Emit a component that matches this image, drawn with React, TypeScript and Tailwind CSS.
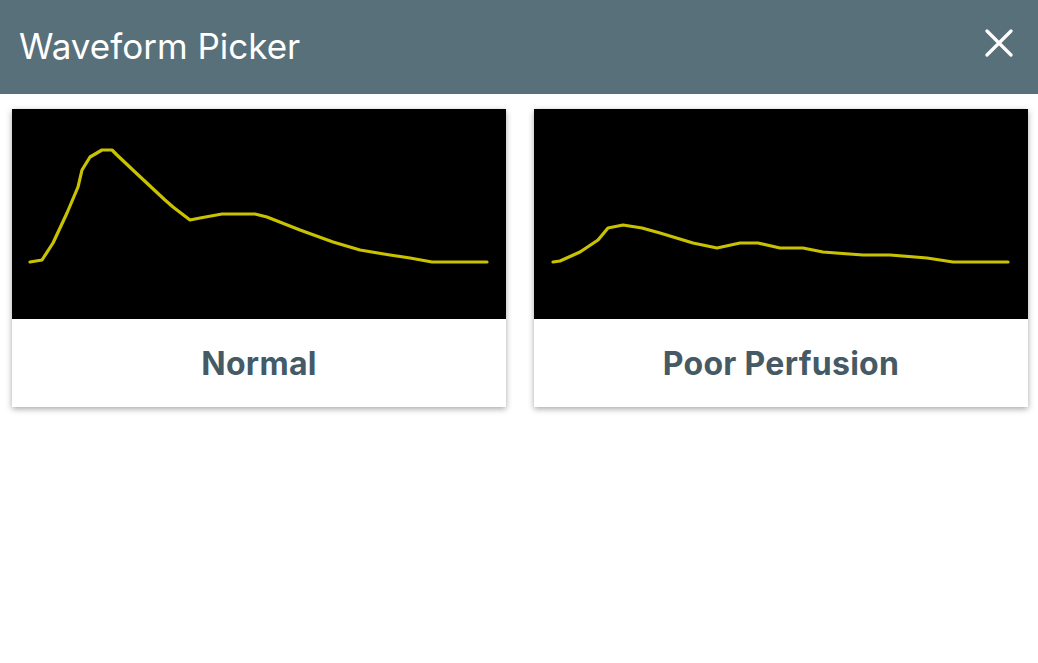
import React from 'react';

const waveforms = [
  {
    name: 'Normal',
    points:
      '18,153 30,151 41,134 55,104 66,78 70,61 78,48 90,41 100,41 105,46 123,63 153,91 161,98 178,111 188,109 210,105 243,105 255,108 288,121 321,133 348,141 378,146 398,149 420,153 475,153',
  },
  {
    name: 'Poor Perfusion',
    points:
      '19,153 26,152 46,143 64,131 74,119 89,116 108,119 126,124 159,134 183,139 206,134 224,134 246,139 269,139 289,143 329,146 356,146 393,149 419,153 474,153',
  },
];

const WaveCard: React.FC<{ name: string; points: string }> = ({ name, points }) => (
  <button className="flex flex-col bg-white shadow-[0_2px_6px_rgba(0,0,0,0.35)] text-left">
    <div className="h-[210px] w-full bg-black">
      <svg viewBox="0 0 494 210" className="w-full h-full block">
        <polyline points={points} fill="none" stroke="#c9c200" strokeWidth={3.2} strokeLinejoin="round" strokeLinecap="round" />
      </svg>
    </div>
    <div className="h-[88px] flex items-center justify-center pt-[2px] text-[32px] font-bold text-[#455a64] tracking-[0.3px]">
      {name}
    </div>
  </button>
);

export default function App() {
  return (
    <div className="w-[1038px] h-[663px] bg-white font-['Inter','Liberation_Sans',sans-serif]">
      <div className="h-[94px] bg-[#587079] flex items-center justify-between pl-[19px] pr-[25px]">
        <h1 className="text-white text-[35px] font-normal pb-[1px]">Waveform Picker</h1>
        <button className="text-white pb-[8px]">
          <svg width="28" height="28" viewBox="0 0 28 28" className="block">
            <path d="M2 2 L26 26 M26 2 L2 26" stroke="currentColor" strokeWidth={3.2} strokeLinecap="round" />
          </svg>
        </button>
      </div>
      <div className="grid grid-cols-2 gap-[28px] pl-[12px] pr-[10px] pt-[15px]">
        {waveforms.map(w => (
          <WaveCard key={w.name} name={w.name} points={w.points} />
        ))}
      </div>
    </div>
  );
}
